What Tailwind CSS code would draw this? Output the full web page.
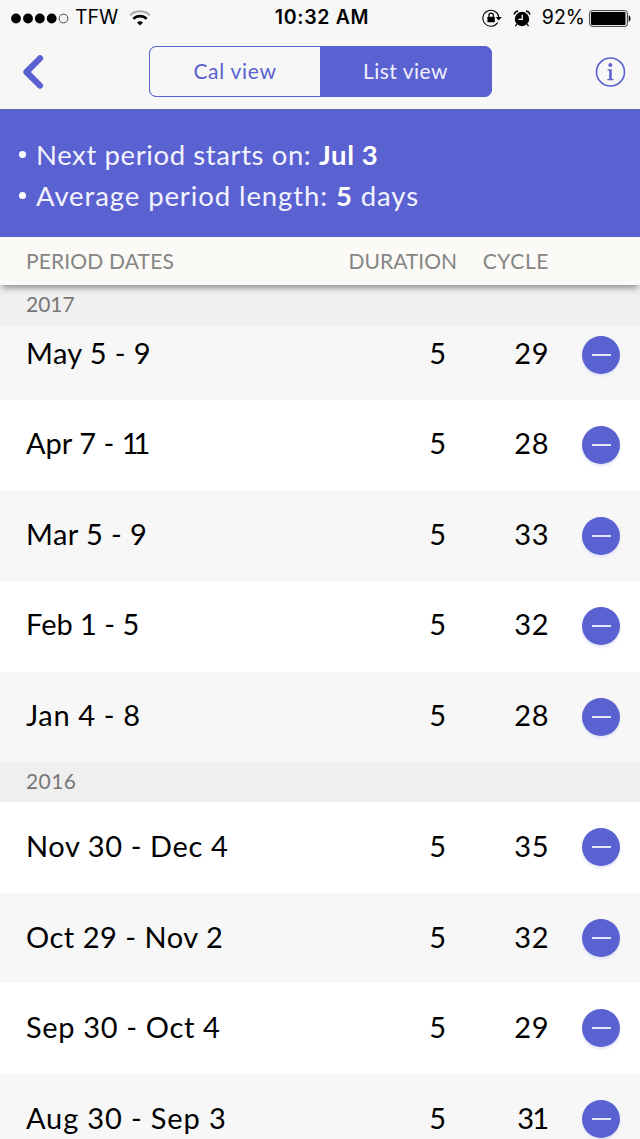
<!DOCTYPE html>
<html lang="en">

<head>
    <title>Period List</title>
    <meta charset="utf-8">
    <meta name="viewport" content="width=device-width, initial-scale=1">
    <script src="https://cdn.jsdelivr.net/npm/@tailwindcss/browser@4"></script>
</head>

<body class="bg-white font-['Lato',sans-serif] text-black">
    <div class="w-[640px] h-[1139px] overflow-hidden flex flex-col">

        <!-- status bar + nav -->
        <header class="h-[109px] shrink-0 bg-[#f7f7f7]">
            <div class="h-9 grid grid-cols-3 items-center font-['Inter',sans-serif] text-[19px] leading-none">
                <div class="flex items-center pl-[11px]">
                    <svg class="w-[58px] h-[11px]" viewBox="0 0 58 11">
                        <circle cx="5" cy="5.5" r="4.9" />
                        <circle cx="17" cy="5.5" r="4.9" />
                        <circle cx="28.8" cy="5.5" r="4.9" />
                        <circle cx="40.7" cy="5.5" r="4.9" />
                        <circle cx="52.5" cy="5.5" r="4.4" fill="none" stroke="#333" stroke-width="0.9" />
                    </svg>
                    <span class="ml-[6px] text-[19.5px]">TFW</span>
                    <svg class="ml-[11px] w-[22px] h-4" viewBox="0 0 22 16" fill="none" stroke-width="2.1">
                        <path d="M1.2 5.2a14.2 14.2 0 0 1 19.6 0" stroke="#aaa" />
                        <path d="M4.4 8.9a9.3 9.3 0 0 1 13.2 0" stroke="#000" stroke-width="2.6" />
                        <path d="M8 12.6a4.6 4.6 0 0 1 6 0L11 15.6z" fill="#000" />
                    </svg>
                </div>
                <div class="text-center font-semibold text-[19.5px] tracking-[0.7px] pl-[4px]">10:32 AM</div>
                <div class="flex items-center justify-end pr-[9px]">
                    <svg class="w-[21px] h-[18px]" viewBox="0 0 21 18">
                        <path d="M15.6 13.6A8 8 0 1 1 16.8 8.2" fill="none" stroke="#000" stroke-width="1.1" />
                        <path d="M13.6 8h6.2l-3.1 3.6z" />
                        <rect x="5.4" y="7.7" width="7.4" height="5.6" rx="0.6" />
                        <path d="M6.9 8V6.3a2.2 2.2 0 0 1 4.4 0V8" fill="none" stroke="#000" stroke-width="1.2" />
                    </svg>
                    <svg class="ml-[10px] w-[18px] h-[17px]" viewBox="0 0 18 17">
                        <circle cx="9" cy="9" r="7.2" />
                        <path d="M1 4.6A5 5 0 0 1 5 1M13 1a5 5 0 0 1 4 3.6M3.9 14.2l-1.5 2M14.1 14.2l1.5 2" fill="none" stroke="#000" stroke-width="1.3" />
                        <path d="M9.2 4.8v4.5H5.5" fill="none" stroke="#fff" stroke-width="1.3" />
                    </svg>
                    <span class="ml-[11px] text-[19.5px]">92%</span>
                    <svg class="ml-1 w-[42px] h-[17px]" viewBox="0 0 42 17">
                        <rect x="0.6" y="0.6" width="37.8" height="15.8" rx="2.6" fill="none" stroke="#222" stroke-width="0.9" />
                        <rect x="2" y="2" width="34.5" height="13" rx="1" />
                        <path d="M39.7 5.3c2.4 1 2.4 5.4 0 6.4z" />
                    </svg>
                </div>
            </div>

            <div class="flex items-center mt-[10px] pl-[22px] pr-[14px]">
                <svg class="w-[22px] h-9" viewBox="0 0 22 36" fill="none" stroke="#5a61d0" stroke-width="6.2" stroke-linecap="round" stroke-linejoin="round">
                    <path d="M18 4.4L4.4 18L18 31.6" />
                </svg>
                <div class="flex w-[343px] h-[51px] ml-[105px] rounded-[7px] overflow-hidden border-[1.5px] border-[#5a61d0] bg-[#5a61d0] text-[21px]">
                    <button class="w-[170px] bg-[#f7f7f7] rounded-l-[5px] pb-[2px] text-[#5a61d0] tracking-[0.7px]">Cal view</button>
                    <button class="flex-1 pb-[2px] text-[#f0f0ff] tracking-[0.5px]">List view</button>
                </div>
                <svg class="ml-auto w-8 h-8" viewBox="0 0 32 32">
                    <circle cx="16.5" cy="16" r="14" fill="none" stroke="#5a61d0" stroke-width="1.6" />
                    <circle cx="16.3" cy="9" r="2" fill="#5a61d0" />
                    <path d="M13.6 13.3h4.1v9.7h1.8v1.2h-6.2V23h1.9v-8.5h-1.6z" fill="#5a61d0" />
                </svg>
            </div>
        </header>

        <!-- summary -->
        <ul class="h-32 shrink-0 border-t border-[#5d61b4] bg-[#5a61d0] pt-6 pl-[19px] text-[27.5px] leading-[41px] text-[#f2f3ff]">
            <li class="flex items-center gap-[10px]">
                <span class="size-[7px] rounded-full bg-white"></span>
                <p class="tracking-[0.6px]">Next period starts on: <b class="text-white">Jul 3</b></p>
            </li>
            <li class="flex items-center gap-[10px]">
                <span class="size-[7px] rounded-full bg-white"></span>
                <p class="tracking-[0.9px]">Average period length: <b class="text-white">5</b> days</p>
            </li>
        </ul>

        <!-- column titles -->
        <div class="relative z-10 h-12 shrink-0 flex items-center bg-[#fcfaf6] pl-[26px] pb-px text-[21px] text-[#858585] shadow-[0_5px_6px_-2px_rgba(0,0,0,0.4)]">
            <span class="flex-1 tracking-[0.15px]">PERIOD DATES</span>
            <span>DURATION</span>
            <span class="w-[92px] mr-[91px] text-right tracking-[0.6px]">CYCLE</span>
        </div>

        <main class="text-[29px]">
            <h2 class="h-[41px] flex items-center bg-[#efefef] pl-[26px] pb-[3px] text-[21px] text-[#777]">2017</h2>

            <!-- first row is scrolled partly under the year heading -->
            <div class="h-[74px] overflow-hidden flex flex-col justify-end">
                <div class="h-[90.5px] shrink-0 flex items-center bg-[#f7f7f7] pl-[26px] pr-5">
                    <span class="flex-1 pb-[5px] tracking-[0.4px]">May 5 - 9</span>
                    <span class="pb-[5px]">5</span>
                    <span class="w-[103px] pb-[5px] text-right tracking-[0.5px]">29</span>
                    <button class="ml-[33px] size-[38px] rounded-full bg-[#5a61d0] flex items-center justify-center shadow-[0_2px_3px_#dfe2f5]"><i class="w-[19px] h-[2px] bg-[#e4e5fa]"></i></button>
                </div>
            </div>
            <div class="h-[90.5px] flex items-center bg-white pl-[26px] pr-5">
                <span class="flex-1 pb-[5px]">Apr 7 - <span class="tracking-[-5px]">11</span></span>
                <span class="pb-[5px]">5</span>
                <span class="w-[103px] pb-[5px] text-right tracking-[0.5px]">28</span>
                <button class="ml-[33px] size-[38px] rounded-full bg-[#5a61d0] flex items-center justify-center shadow-[0_2px_3px_#dfe2f5]"><i class="w-[19px] h-[2px] bg-[#e4e5fa]"></i></button>
            </div>
            <div class="h-[90.5px] flex items-center bg-[#f7f7f7] pl-[26px] pr-5">
                <span class="flex-1 pb-[5px] tracking-[0.4px]">Mar 5 - 9</span>
                <span class="pb-[5px]">5</span>
                <span class="w-[103px] pb-[5px] text-right tracking-[0.5px]">33</span>
                <button class="ml-[33px] size-[38px] rounded-full bg-[#5a61d0] flex items-center justify-center shadow-[0_2px_3px_#dfe2f5]"><i class="w-[19px] h-[2px] bg-[#e4e5fa]"></i></button>
            </div>
            <div class="h-[90.5px] flex items-center bg-white pl-[26px] pr-5">
                <span class="flex-1 pb-[5px]">Feb 1 - 5</span>
                <span class="pb-[5px]">5</span>
                <span class="w-[103px] pb-[5px] text-right tracking-[0.5px]">32</span>
                <button class="ml-[33px] size-[38px] rounded-full bg-[#5a61d0] flex items-center justify-center shadow-[0_2px_3px_#dfe2f5]"><i class="w-[19px] h-[2px] bg-[#e4e5fa]"></i></button>
            </div>
            <div class="h-[90.5px] flex items-center bg-[#f7f7f7] pl-[26px] pr-5">
                <span class="flex-1 pb-[5px] tracking-[0.65px]">Jan 4 - 8</span>
                <span class="pb-[5px]">5</span>
                <span class="w-[103px] pb-[5px] text-right tracking-[0.5px]">28</span>
                <button class="ml-[33px] size-[38px] rounded-full bg-[#5a61d0] flex items-center justify-center shadow-[0_2px_3px_#dfe2f5]"><i class="w-[19px] h-[2px] bg-[#e4e5fa]"></i></button>
            </div>

            <h2 class="h-10 flex items-center bg-[#efefef] pl-[26px] pb-[2px] text-[21px] text-[#777] tracking-[0.4px]">2016</h2>
            <div class="h-[90.5px] flex items-center bg-white pl-[26px] pr-5">
                <span class="flex-1 pb-[3px] tracking-[0.6px]">Nov 30 - Dec 4</span>
                <span class="pb-[3px]">5</span>
                <span class="w-[103px] pb-[3px] text-right tracking-[0.5px]">35</span>
                <button class="ml-[33px] size-[38px] rounded-full bg-[#5a61d0] flex items-center justify-center shadow-[0_2px_3px_#dfe2f5]"><i class="w-[19px] h-[2px] bg-[#e4e5fa]"></i></button>
            </div>
            <div class="h-[90.5px] flex items-center bg-[#f7f7f7] pl-[26px] pr-5">
                <span class="flex-1 pb-[3px] tracking-[0.5px]">Oct 29 - Nov 2</span>
                <span class="pb-[3px]">5</span>
                <span class="w-[103px] pb-[3px] text-right tracking-[0.5px]">32</span>
                <button class="ml-[33px] size-[38px] rounded-full bg-[#5a61d0] flex items-center justify-center shadow-[0_2px_3px_#dfe2f5]"><i class="w-[19px] h-[2px] bg-[#e4e5fa]"></i></button>
            </div>
            <div class="h-[90.5px] flex items-center bg-white pl-[26px] pr-5">
                <span class="flex-1 pb-[3px] tracking-[0.65px]">Sep 30 - Oct 4</span>
                <span class="pb-[3px]">5</span>
                <span class="w-[103px] pb-[3px] text-right tracking-[0.5px]">29</span>
                <button class="ml-[33px] size-[38px] rounded-full bg-[#5a61d0] flex items-center justify-center shadow-[0_2px_3px_#dfe2f5]"><i class="w-[19px] h-[2px] bg-[#e4e5fa]"></i></button>
            </div>
            <div class="h-[90.5px] flex items-center bg-[#f7f7f7] pl-[26px] pr-5">
                <span class="flex-1 pb-[3px] tracking-[0.85px]">Aug 30 - Sep 3</span>
                <span class="pb-[3px]">5</span>
                <span class="w-[103px] pb-[3px] pr-[2px] text-right tracking-[-2px]">31</span>
                <button class="ml-[33px] size-[38px] rounded-full bg-[#5a61d0] flex items-center justify-center shadow-[0_2px_3px_#dfe2f5]"><i class="w-[19px] h-[2px] bg-[#e4e5fa]"></i></button>
            </div>
        </main>
    </div>
</body>

</html>
